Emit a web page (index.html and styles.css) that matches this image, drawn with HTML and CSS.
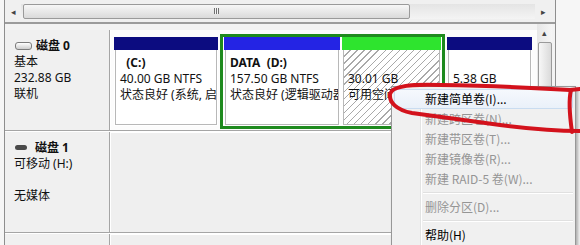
FILE: index.html
```html
<!DOCTYPE html>
<html lang="zh-CN">
<head>
    <meta charset="UTF-8">
    <meta name="viewport" content="width=device-width, initial-scale=1.0">
    <title>磁盘管理</title>
    <link rel="stylesheet" href="styles.css">
</head>
<body>
    <div class="window">
        <div class="hscroll">
            <span class="arrow">&#9666;</span>
            <div class="track">
                <div class="thumb"><span class="grip"></span></div>
            </div>
            <span class="arrow">&#9656;</span>
        </div>
        <div class="view">
            <div class="rows">
                <div class="disk">
                    <div class="label">
                        <div class="name"><span class="icon basic"></span>磁盘 0</div>
                        <div>基本</div>
                        <div>232.88 GB</div>
                        <div>联机</div>
                    </div>
                    <div class="parts">
                        <div class="part primary part-c">
                            <div class="bar"></div>
                            <div class="body">
                                <div class="vol">  (C:)</div>
                                <div>40.00 GB NTFS</div>
                                <div>状态良好 (系统, 启动, 页面文件, 活动, 故障转储, 主分区)</div>
                            </div>
                        </div>
                        <div class="extended">
                            <div class="part logical part-d">
                                <div class="bar"></div>
                                <div class="body">
                                    <div class="vol">DATA  (D:)</div>
                                    <div>157.50 GB NTFS</div>
                                    <div>状态良好 (逻辑驱动器)</div>
                                </div>
                            </div>
                            <div class="part free part-free">
                                <div class="bar"></div>
                                <div class="body">
                                    <div>&nbsp;</div>
                                    <div>30.01 GB</div>
                                    <div>可用空间</div>
                                </div>
                            </div>
                        </div>
                        <div class="part primary part-e">
                            <div class="bar"></div>
                            <div class="body">
                                <div>&nbsp;</div>
                                <div>5.38 GB</div>
                                <div>未分配</div>
                            </div>
                        </div>
                    </div>
                </div>
                <div class="disk">
                    <div class="label">
                        <div class="name"><span class="icon removable"></span>磁盘 1</div>
                        <div>可移动 (H:)</div>
                        <div>&nbsp;</div>
                        <div>无媒体</div>
                    </div>
                    <div class="parts empty"></div>
                </div>
                <div class="disk">
                    <div class="label">
                        <div class="name faint"><span class="icon cdrom"></span>CD-ROM 0</div>
                        <div>DVD (E:)</div>
                    </div>
                    <div class="parts empty"></div>
                </div>
            </div>
            <div class="vscroll">
                <span class="arrow">&#9652;</span>
                <div class="vthumb"></div>
            </div>
        </div>
    </div>

    <!-- context menu over the free space -->
    <div class="menu">
        <div class="item hover">新建简单卷(I)...</div>
        <div class="item off">新建跨区卷(N)...</div>
        <div class="item off">新建带区卷(T)...</div>
        <div class="item off">新建镜像卷(R)...</div>
        <div class="item off">新建 RAID-5 卷(W)...</div>
        <div class="sep"></div>
        <div class="item off">删除分区(D)...</div>
        <div class="sep"></div>
        <div class="item">帮助(H)</div>
    </div>

    <svg class="marker" width="580" height="245" viewBox="0 0 580 245">
        <path d="M580 89 L570 90 C540 88 500 86 440 85 C410 84 392 86 390 94 C389 102 396 110 412 113 C440 117 470 121 500 125 C530 129 560 131 580 131" />
        <path d="M571 90 C568 102 570 118 572 132" />
    </svg>
</body>
</html>
```

FILE: styles.css
```css
body {
    margin: 0;
    width: 580px;
    height: 245px;
    overflow: hidden;
    position: relative;
    background: #f6f6f6;
    font-family: "Noto Sans", "Noto Sans CJK SC", sans-serif;
    font-size: 12px;
    color: #111;
}
.window {
    margin-left: 4px;
    width: 550px;
    height: 245px;
    border-left: 1px solid #8e8e8e;
    border-right: 1px solid #8e8e8e;
    background: #f3f3f3;
    display: flex;
    flex-direction: column;
}
.hscroll {
    display: flex;
    align-items: center;
    height: 22px;
    padding-right: 4px;
    border-bottom: 2px solid #9c9c9c;
    background: #f0f0f0;
}
.arrow {
    width: 16px;
    text-align: center;
    font-size: 9px;
    color: #444;
}
.track {
    flex: 1;
    height: 15px;
    display: flex;
    align-items: center;
    padding-left: 2px;
    background: linear-gradient(#e4e4e4, #f4f4f4);
}
.thumb {
    width: 387px;
    height: 15px;
    box-sizing: border-box;
    border: 1px solid #9a9a9a;
    border-radius: 2px;
    background: linear-gradient(#f7f7f7, #dadada);
    display: flex;
    justify-content: center;
    align-items: center;
}
.grip {
    width: 5px;
    height: 6px;
    background: repeating-linear-gradient(90deg, #707070 0 1px, #f4f4f4 1px 2px);
}
.view {
    flex: 1;
    display: flex;
    min-height: 0;
}
.rows {
    flex: 1;
    padding-top: 6px;
    overflow: hidden;
}
.disk {
    display: flex;
    height: 100px;
    border-bottom: 1px solid #a5a5a5;
    box-shadow: 0 1px 0 #fff;
    margin-bottom: 1px;
}
.label {
    width: 105px;
    box-sizing: border-box;
    padding: 8px 0 0 9px;
    border-right: 1px solid #a5a5a5;
    background: #f0f0f0;
    line-height: 16px;
    white-space: nowrap;
}
.name {
    font-weight: bold;
}
.faint {
    color: #bbb;
}
.icon {
    display: inline-block;
    vertical-align: middle;
    margin: -2px 4px 0 1px;
    border-radius: 3px;
}
.icon.basic {
    width: 15px;
    height: 6px;
    border: 1px solid #7c7c7c;
    background: linear-gradient(#fff, #cdcdcd);
}
.icon.removable {
    width: 12px;
    height: 5px;
    margin-right: 8px;
    background: #4a4a4a;
}
.icon.cdrom {
    width: 11px;
    height: 7px;
    margin-left: 5px;
    background: #c4c4c4;
}
.parts {
    flex: 1;
    display: flex;
    align-items: flex-start;
    gap: 2px;
    padding: 4px 0 0 3px;
    background: #fcfcfc;
    border-left: 1px solid #fff;
}
.parts.empty {
    background: #efefef;
    border-top: 1px solid #fff;
}
.part {
    height: 89px;
    box-sizing: border-box;
    display: flex;
    flex-direction: column;
    background: #fff;
}
.part-c {
    width: 104px;
    margin-top: 3px;
}
.part-e {
    width: 85px;
    margin-top: 3px;
}
.part-d {
    width: 116px;
}
.part-free {
    width: 99px;
}
.extended {
    width: 225px;
    height: 95px;
    box-sizing: border-box;
    border: 3px solid #1e8a1e;
    padding: 0 1px;
    display: flex;
    gap: 2px;
    background: #fff;
}
.bar {
    height: 13px;
    flex: none;
}
.primary .bar {
    background: #0c0c80;
}
.logical .bar {
    background: #2424e4;
}
.free .bar {
    background: #2ee42e;
}
.body {
    flex: 1;
    margin: 0 1px 1px;
    padding: 5px 0 0 4px;
    border: 1px solid #b8b8b8;
    border-top: none;
    line-height: 16px;
    white-space: nowrap;
    overflow: hidden;
}
.free .body {
    background: repeating-linear-gradient(135deg, #fff 0 4px, #a9a9a9 4px 5px);
}
.vol {
    font-weight: bold;
    white-space: pre;
}
.vscroll {
    width: 15px;
    margin-right: 3px;
    display: flex;
    flex-direction: column;
    align-items: center;
    background: linear-gradient(90deg, #e6e6e6, #f5f5f5);
}
.vscroll .arrow {
    height: 17px;
    line-height: 17px;
}
.vthumb {
    width: 14px;
    height: 130px;
    margin-top: 1px;
    box-sizing: border-box;
    border: 1px solid #9a9a9a;
    border-radius: 2px;
    background: linear-gradient(90deg, #f7f7f7, #dadada);
}
/* context menu */
.menu {
    position: absolute;
    left: 391px;
    top: 86px;
    width: 179px;
    height: 170px;
    padding: 2px;
    background: #f0f0f0;
    border: 1px solid #979797;
    box-shadow: 2px 2px 3px rgba(0, 0, 0, 0.3);
    font-family: "Noto Sans CJK SC", sans-serif;
}
.menu::before {
    content: "";
    position: absolute;
    left: 28px;
    top: 2px;
    bottom: 2px;
    width: 1px;
    background: #e2e3e3;
    border-right: 1px solid #fff;
}
.item {
    position: relative;
    height: 20px;
    line-height: 20px;
    padding-left: 31px;
    white-space: nowrap;
    color: #000;
}
.item.off {
    color: #959595;
}
.item.hover {
    background: linear-gradient(#f6f9fd, #e9f0f9);
    box-shadow: inset 0 0 0 1px #c9dcf0;
    border-radius: 3px;
}
.sep {
    position: relative;
    height: 8px;
    margin-left: 29px;
    background: linear-gradient(#f0f0f0 3px, #e0e0e0 3px 4px, #fff 4px 5px, #f0f0f0 5px);
}
.marker {
    position: absolute;
    left: 0;
    top: 0;
    pointer-events: none;
}
.marker path {
    fill: none;
    stroke: #d3121c;
    stroke-width: 4;
    stroke-linecap: round;
    stroke-linejoin: round;
}
```
